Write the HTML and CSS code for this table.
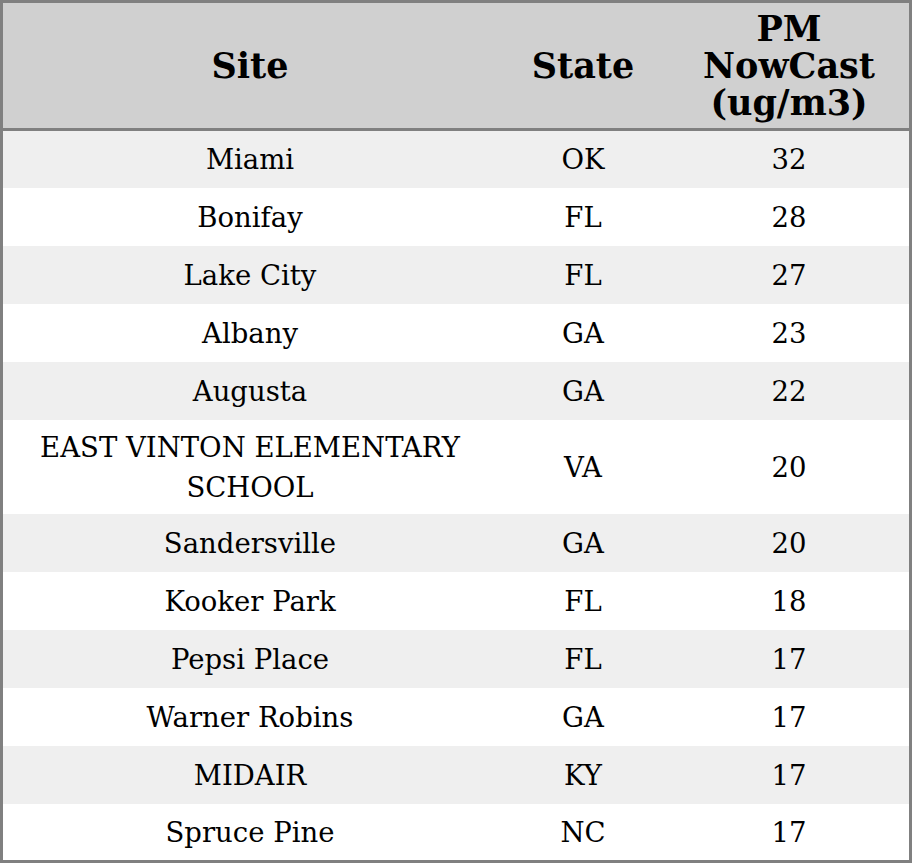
FILE: index.html
```html
<!DOCTYPE html>
<html>
<head>
<meta charset="utf-8">
<link rel="stylesheet" href="styles.css">
</head>
<body>
<table class="grid">
  <thead>
    <tr>
      <th class="c-site">Site</th>
      <th class="c-state">State</th>
      <th class="c-pm">PM<br>NowCast<br>(ug/m3)</th>
    </tr>
  </thead>
  <tbody>
    <tr><td>Miami</td><td>OK</td><td>32</td></tr>
    <tr><td>Bonifay</td><td>FL</td><td>28</td></tr>
    <tr><td>Lake City</td><td>FL</td><td>27</td></tr>
    <tr><td>Albany</td><td>GA</td><td>23</td></tr>
    <tr><td>Augusta</td><td>GA</td><td>22</td></tr>
    <tr><td>EAST VINTON ELEMENTARY<br>SCHOOL</td><td>VA</td><td>20</td></tr>
    <tr><td>Sandersville</td><td>GA</td><td>20</td></tr>
    <tr><td>Kooker Park</td><td>FL</td><td>18</td></tr>
    <tr><td>Pepsi Place</td><td>FL</td><td>17</td></tr>
    <tr><td>Warner Robins</td><td>GA</td><td>17</td></tr>
    <tr><td>MIDAIR</td><td>KY</td><td>17</td></tr>
    <tr><td>Spruce Pine</td><td>NC</td><td>17</td></tr>
  </tbody>
</table>
</body>
</html>
```
FILE: styles.css
```css
html, body {
  margin: 0;
  padding: 0;
  background: #ffffff;
}
.grid {
  width: 912px;
  table-layout: fixed;
  border-collapse: collapse;
  border: 3px solid #808080;
  font-family: "DejaVu Serif", serif;
  color: #000;
}
.grid th {
  background: #d0d0d0;
  font-size: 35px;
  font-weight: bold;
  line-height: 37px;
  padding: 7px 0;
  border-bottom: 3px solid #808080;
  text-align: center;
}
.c-site { width: 494px; }
.c-state { width: 172px; }
.grid tbody tr { height: 58px; }
.grid td {
  font-size: 27.5px;
  line-height: 40px;
  padding: 7px 0;
  text-align: center;
  vertical-align: middle;
}
.grid tbody tr:nth-child(odd) td { background: #efefef; }
.grid tbody tr:nth-child(even) td { background: #ffffff; }
```
